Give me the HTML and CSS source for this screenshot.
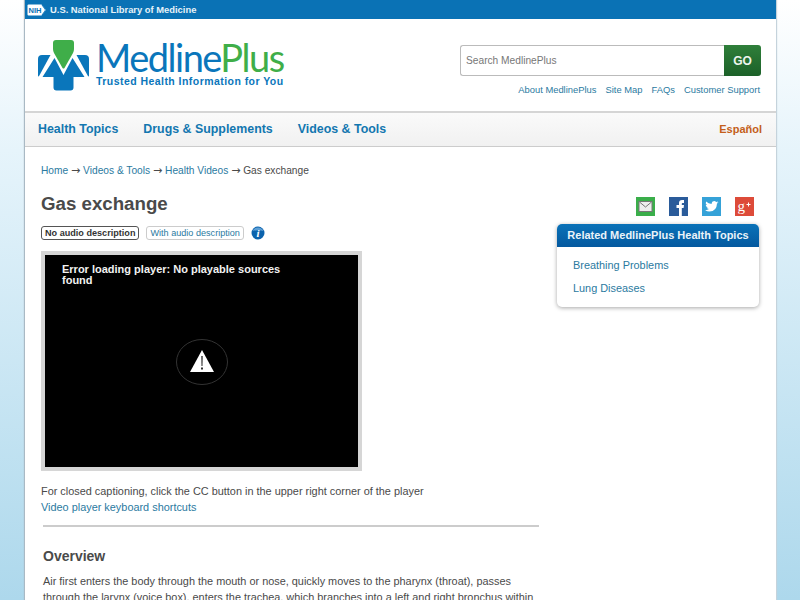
FILE: index.html
```html
<!DOCTYPE html>
<html lang="en">
<head>
	<meta charset="UTF-8">
	<meta name="viewport" content="width=device-width, initial-scale=1.0">
	<link rel="stylesheet" href="styles.css">
	<title>Gas exchange: MedlinePlus</title>
</head>
<body>
	<div class="page">
		<div class="nlm-bar">
			<svg class="nih-logo" viewBox="0 0 20 12" width="20" height="12" aria-hidden="true">
				<path d="M1.500 0.500H14.500L19 6 14.500 11.500H1.500Q0.500 11.500 0.500 10.500V1.500Q0.500 0.500 1.500 0.500z" fill="#fff"/>
				<path d="M15 1l3.500 5-3.500 5" fill="none" stroke="#0a72b5" stroke-width="0.8"/>
				<text x="1.500" y="8.800" class="nih-text">NIH</text>
			</svg>
			<span>U.S. National Library of Medicine</span>
		</div>

		<header class="masthead">
			<a class="logo" href="#">
				<svg class="logo-mark" viewBox="0 0 52 52" width="52" height="52" aria-hidden="true">
					<path d="M15 3Q15 0 18 0H33Q36 0 36 3V9Q36 11 35 13L26.500 28Q25.500 29 24.500 28L16 13Q15 11 15 9z" fill="#3fae49"/>
					<path d="M4 15H12.500L0.800 36.500Q0 36.500 0 35.500V19Q0 15 4 15z" fill="#0a76bb"/>
					<path d="M38.500 15H47Q51 15 51 19V35.500Q51 36.500 50.200 36.500z" fill="#0a76bb"/>
					<path d="M16.500 18L25.500 35L34.500 18L46.500 37H35.500V47.500Q35.500 50.500 32.500 50.500H18.500Q15.500 50.500 15.500 47.500V37H4.500z" fill="#0a76bb"/>
				</svg>
				<span class="logo-words">
					<span class="logo-name">Medline<span class="logo-plus">Plus</span></span>
					<span class="logo-tag">Trusted Health Information for You</span>
				</span>
			</a>
			<div class="tools">
				<form class="search">
					<input class="search-box" type="text" placeholder="Search MedlinePlus">
					<button class="search-go" type="button">GO</button>
				</form>
				<nav class="tool-links">
					<a href="#">About MedlinePlus</a>
					<a href="#">Site Map</a>
					<a href="#">FAQs</a>
					<a href="#">Customer Support</a>
				</nav>
			</div>
		</header>

		<nav class="main-nav">
			<a href="#">Health Topics</a>
			<a href="#">Drugs &amp; Supplements</a>
			<a href="#">Videos &amp; Tools</a>
			<a class="espanol" href="#">Español</a>
		</nav>

		<div class="content">
			<div class="crumbs">
				<a href="#">Home</a> <span class="sep">→</span> <a href="#">Videos &amp; Tools</a> <span class="sep">→</span> <a href="#">Health Videos</a> <span class="sep">→</span> Gas exchange
			</div>
			<div class="columns">
				<main class="main-col">
					<h1>Gas exchange</h1>
					<div class="audio-tabs">
						<span class="tab tab-on">No audio description</span>
						<a class="tab" href="#">With audio description</a>
						<svg class="info" viewBox="0 0 14 14" width="14" height="14" aria-hidden="true">
							<circle cx="7" cy="7" r="6.500" fill="#0b63ad"/>
							<path d="M1.500 5A6 6 0 0 1 12.500 5Q7 3.500 1.500 5z" fill="#5d9fd6"/>
							<text x="7" y="11" class="info-i">i</text>
						</svg>
					</div>
					<div class="player">
						<div class="player-error">Error loading player: No playable sources found</div>
						<svg class="player-icon" viewBox="0 0 52 46" width="52" height="46" aria-hidden="true">
							<ellipse cx="26" cy="23" rx="25.500" ry="22.500" fill="#000" stroke="#333"/>
							<path d="M26 11L38 33H14z" fill="#fff"/>
							<path d="M25.400 17h1.200l-0.200 10h-0.800z" fill="#000"/>
							<rect x="25.200" y="28.500" width="1.600" height="2" fill="#000"/>
						</svg>
					</div>
					<p class="caption-note">For closed captioning, click the CC button in the upper right corner of the player</p>
					<p class="shortcuts"><a href="#">Video player keyboard shortcuts</a></p>
					<hr class="rule">
					<section class="overview">
						<h2>Overview</h2>
						<p>Air first enters the body through the mouth or nose, quickly moves to the pharynx (throat), passes through the larynx (voice box), enters the trachea, which branches into a left and right bronchus within the lungs and further divides into smaller and smaller branches called bronchioles.</p>
					</section>
				</main>
				<aside class="side-col">
					<div class="share">
						<a class="share-btn share-mail" href="#" aria-label="Email">
							<svg viewBox="0 0 19 19" width="19" height="19"><rect x="3" y="4.500" width="13" height="10" fill="#eee" stroke="#777"/><path d="M3.500 5l6 5 6-5" fill="none" stroke="#777"/></svg>
						</a>
						<a class="share-btn share-fb" href="#" aria-label="Facebook">
							<svg viewBox="0 0 19 19" width="19" height="19"><path d="M10 19V11H7.500V8H10V6Q10 3 13 3H15V6H13.500Q12.800 6 12.800 6.800V8H15L14.600 11H12.800V19z" fill="#fff"/></svg>
						</a>
						<a class="share-btn share-tw" href="#" aria-label="Twitter">
							<svg viewBox="0 0 19 19" width="19" height="19"><path d="M16.500 5.200Q15.600 5.600 14.800 5.700 15.700 5.100 16 4.200 15.100 4.700 14.200 4.900 13.300 4 12.100 4 9.700 4.200 9.600 6.500L9.700 7.100Q6.400 6.900 4.100 4.500 3 6.600 4.900 8.100 4.200 8.100 3.700 7.800 3.700 9.800 5.800 10.300 5.200 10.500 4.600 10.300 5.100 12 7 12.100 5.300 13.400 3 13.200 5.200 14.500 7.500 14.500 14.700 14.300 15 6.500 15.900 5.900 16.500 5.200z" fill="#fff"/></svg>
						</a>
						<a class="share-btn share-gp" href="#" aria-label="Google Plus">
							<svg viewBox="0 0 19 19" width="19" height="19"><text x="2.500" y="13.500" class="gp-g">g</text><path d="M11.500 7.500h4M13.500 5.500v4" stroke="#fff" stroke-width="1" fill="none"/></svg>
						</a>
					</div>
					<div class="related">
						<h3>Related MedlinePlus Health Topics</h3>
						<ul>
							<li><a href="#">Breathing Problems</a></li>
							<li><a href="#">Lung Diseases</a></li>
						</ul>
					</div>
				</aside>
			</div>
		</div>
	</div>
</body>
</html>
```

FILE: styles.css
```css
* {
  box-sizing: border-box;
  margin: 0;
  padding: 0;
}
html, body {
  height: 600px;
  overflow: hidden;
}
body {
  background: linear-gradient(#fff 0, #e6f4fb 150px, #add8ec 600px);
  color: #4a4a4a;
  font: 10.900px/16px "Liberation Sans", Arial, sans-serif;
}
a {
  color: #2b7a9f;
  text-decoration: none;
}
.page {
  width: 751px;
  min-height: 800px;
  margin-left: 25px;
  background: #fff;
  box-shadow: -1px 0 1px #a9b9c4, 1px 0 1px #c5d3dc;
}

/* top bar */
.nlm-bar {
  display: flex;
  align-items: center;
  gap: 3px;
  height: 19px;
  padding-left: 2px;
  background: #0a72b5;
  color: #e6f2f9;
  font-size: 9.400px;
  font-weight: bold;
}
.nih-text {
  fill: #0a72b5;
  font: bold 7.500px "Liberation Sans", sans-serif;
}

/* header */
.masthead {
  display: flex;
  justify-content: space-between;
  height: 92px;
  padding: 21px 15px 0 13px;
}
.logo {
  display: flex;
  gap: 6px;
  height: 52px;
}
.logo-words {
  display: flex;
  flex-direction: column;
  width: 190px;
}
.logo-name {
  height: 35px;
  color: #0a76bb;
  font: 400 38px/35px Lato, sans-serif;
  letter-spacing: -1.500px;
}
.logo-plus {
  color: #3fae49;
}
.logo-tag {
  color: #0a76bb;
  font-size: 10.500px;
  font-weight: bold;
  line-height: 13px;
  letter-spacing: 0.450px;
  white-space: nowrap;
}
.tools {
  display: flex;
  flex-direction: column;
  width: 301px;
  padding-top: 5px;
}
.search {
  display: flex;
  height: 31px;
}
.search-box {
  flex: 1;
  padding-left: 5px;
  border: 1px solid #bbb;
  border-right: 0;
  border-radius: 3px 0 0 3px;
  color: #777;
  font: 10.200px "Liberation Sans", sans-serif;
}
.search-box::placeholder {
  color: #777;
}
.search-go {
  width: 37px;
  border: 0;
  border-radius: 0 3px 3px 0;
  background: linear-gradient(#2f7f3a, #1c6129);
  color: #eef5ee;
  font: bold 12px "Liberation Sans", sans-serif;
}
.tool-links {
  display: flex;
  justify-content: flex-end;
  gap: 9px;
  margin-top: 6px;
  padding-right: 1px;
  font-size: 9.400px;
}

/* main navigation */
.main-nav {
  display: flex;
  align-items: center;
  gap: 25px;
  height: 36px;
  padding: 0 14px 1px 13px;
  border-top: 2px solid #d5d5d5;
  border-bottom: 1px solid #ccc;
  background: linear-gradient(#fafafa, #f1f1f1);
  font-size: 12.400px;
  font-weight: bold;
}
.main-nav a {
  color: #1277b0;
}
.main-nav .espanol {
  margin-left: auto;
  color: #c45f1a;
  font-size: 11px;
}

/* content */
.content {
  padding: 17px 17px 0 16px;
}
.crumbs {
  height: 18px;
  font-size: 10.200px;
  line-height: 14px;
}
.sep {
  font: 11px "DejaVu Sans", sans-serif;
}
.columns {
  display: flex;
  justify-content: space-between;
}
.main-col {
  width: 498px;
}
h1 {
  margin-top: 10px;
  font-size: 18.700px;
  line-height: 24px;
}
.audio-tabs {
  display: flex;
  align-items: center;
  gap: 7px;
  margin-top: 10px;
}
.tab {
  padding: 0 3px;
  border: 1px solid #ccc;
  border-radius: 3px;
  font-size: 9.100px;
  line-height: 12px;
}
.tab-on {
  border-color: #555;
  color: #333;
  font-weight: bold;
}
.player {
  display: flex;
  align-items: center;
  justify-content: center;
  position: relative;
  width: 321px;
  height: 220px;
  margin-top: 11px;
  padding-top: 2px;
  border: 4px solid #d6d6d6;
  background: #000;
}
.player-error {
  position: absolute;
  top: 9px;
  left: 17px;
  width: 240px;
  color: #f2f2f2;
  font-size: 11px;
  font-weight: bold;
  line-height: 11px;
}
.caption-note {
  margin-top: 12px;
}
.rule {
  height: 2px;
  margin: 10px 0 0 2px;
  border: 0;
  background: #ccc;
}
.overview {
  padding-left: 2px;
}
h2 {
  margin-top: 19px;
  font-size: 14px;
  line-height: 20px;
}
.overview p {
  margin-top: 7px;
}

/* right column */
.side-col {
  width: 202px;
}
.share {
  display: flex;
  justify-content: flex-end;
  gap: 14px;
  margin-top: 15px;
  padding-right: 5px;
}
.share-btn {
  width: 19px;
  height: 19px;
}
.share-btn svg {
  display: block;
}
.share-mail {
  background: #3aae4a;
}
.share-fb {
  background: #2a5b9a;
}
.share-tw {
  background: #35a2d8;
}
.share-gp {
  background: #dd4b39;
}
.gp-g {
  fill: #fff;
  font: 15px "Liberation Serif", serif;
}
.info-i {
  fill: #fff;
  font: italic bold 11px "Liberation Serif", serif;
  text-anchor: middle;
}
.related {
  margin-top: 8px;
  border-radius: 5px;
  background: #fff;
  box-shadow: 0 1px 4px rgba(0, 0, 0, 0.35);
}
.related h3 {
  height: 23px;
  border-radius: 5px 5px 0 0;
  background: linear-gradient(#0a72b8, #04599f);
  color: #eaf3f9;
  font-size: 11px;
  line-height: 23px;
  text-align: center;
}
.related ul {
  padding: 7px 16px 7px;
  list-style: none;
}
.related li {
  line-height: 23px;
}
```
